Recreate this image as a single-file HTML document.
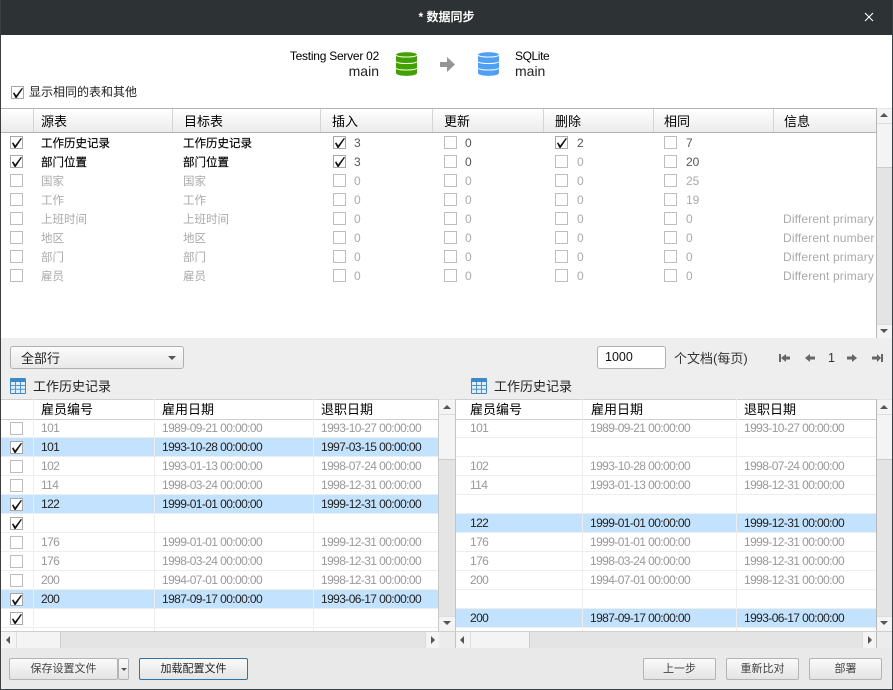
<!DOCTYPE html>
<html lang="zh"><head><meta charset="utf-8"><title>数据同步</title>
<style>
html,body{margin:0;padding:0;width:893px;height:690px;overflow:hidden;background:#eee}
body{position:relative;font:12px/19px "Liberation Sans","Noto Sans CJK SC",sans-serif;color:#000}
div,span{position:absolute;box-sizing:border-box;white-space:nowrap}
svg{position:absolute;display:block}
.c{width:13px;height:13px;border:1px solid #bdbdbd;background:#fff}
.k{border-color:#a8a8a8}
.k::after{content:"";position:absolute;left:1px;top:1px;width:10px;height:10px;background:#111;clip-path:polygon(0 52%,12% 44%,32% 74%,88% 0,100% 5%,36% 100%,25% 100%)}
.r{left:0;height:19px;width:100%}
.q span:not(.c){top:1px}
.q span.nm{font-size:11.5px;top:2px}
.bd{-webkit-text-stroke:.15px #000}
.di{letter-spacing:.15px}
.g{color:#aaa}.d{color:#555}
.v{top:0;bottom:0;width:1px;background:#d4d4d4}
.hd span{top:0;font-size:13px;line-height:23px}
.hd1 span{top:1px}
.t{overflow:hidden;background:#fff}
.t .r{border-bottom:1px solid #eee}
.t .b{background:#c3e2fd;border-bottom:1px solid #eee}
.t .r span{top:0;line-height:19px;color:#999;letter-spacing:-.6px}
.t .r span.c{top:3px}
.t .b span{color:#222}
.l{width:1px;top:0;bottom:0;background:#eee}
.sb{background:#e4e4e4;border-left:1px solid #c8c8c8}
.btn{background:linear-gradient(#fafafa,#e4e4e4);border:1px solid #b4b4b4;border-radius:2px;text-align:center;height:22px;line-height:20px;color:#444;font-size:11px}
.tu{width:0;height:0;border:4px solid transparent;border-top:0;border-bottom:4px solid #555}
.td{width:0;height:0;border:4px solid transparent;border-bottom:0;border-top:4px solid #555}
.tl{width:0;height:0;border:4px solid transparent;border-left:0;border-right:4px solid #555}
.tr{width:0;height:0;border:4px solid transparent;border-right:0;border-left:4px solid #555}
.bt{background:#f4f4f4}
.wb{background:#f4f4f4}
</style></head><body>

<!-- title bar -->
<div style="left:0;top:0;width:893px;height:35px;background:#2d3235"></div>
<div style="left:0;top:0;width:893px;height:35px;text-align:center;line-height:34px;color:#fff;font-weight:bold;font-size:12px">* 数据同步</div>
<svg style="left:864px;top:12px" width="10" height="10" viewBox="0 0 10 10"><path d="M1 1L9 9M9 1L1 9" stroke="#fff" stroke-width="1.1" fill="none"/></svg>

<!-- top white -->
<div style="left:1px;top:35px;width:891px;height:303px;background:#fff"></div>
<div style="left:220px;top:47px;width:159px;text-align:right;line-height:18px;letter-spacing:-.25px">Testing Server 02</div>
<div style="left:220px;top:62px;width:159px;text-align:right;line-height:18px;font-size:14px;color:#222">main</div>
<div style="left:515px;top:47px;line-height:18px;letter-spacing:-.4px">SQLite</div>
<div style="left:515px;top:62px;line-height:18px;font-size:14px;color:#222">main</div>

<svg style="left:395px;top:51px" width="23" height="26" viewBox="0 0 23 26">
<path d="M1 4C1 .4 22 .4 22 4V22C22 25.8 1 25.8 1 22Z" fill="#42a000"/>
<path d="M1 4.3C4 6.6 19 6.6 22 4.3M1 10.8C4 13.1 19 13.1 22 10.8M1 17.3C4 19.6 19 19.6 22 17.3" stroke="#fff" stroke-width="1" fill="none" opacity=".95"/>
</svg>
<svg style="left:477px;top:51px" width="23" height="26" viewBox="0 0 23 26">
<path d="M1 4C1 .4 22 .4 22 4V22C22 25.8 1 25.8 1 22Z" fill="#4f9ff5"/>
<path d="M1 4.3C4 6.6 19 6.6 22 4.3M1 10.8C4 13.1 19 13.1 22 10.8M1 17.3C4 19.6 19 19.6 22 17.3" stroke="#fff" stroke-width="1" fill="none" opacity=".95"/>
</svg>
<svg style="left:440px;top:57px" width="16" height="16" viewBox="0 0 16 16"><path d="M0 5H7V0L15 7.5L7 15V10H0Z" fill="#959595"/></svg>

<span class="c k" style="left:11px;top:86px"></span>
<div style="left:29px;top:83px;color:#222">显示相同的表和其他</div>

<!-- top table -->
<div class="hd hd1" style="left:1px;top:108px;width:875px;height:25px;border-top:1px solid #b2b2b2;border-bottom:1px solid #b2b2b2;background:linear-gradient(#fff,#ebebeb)">
<span style="left:40px">源表</span><span style="left:183px">目标表</span><span style="left:331px">插入</span><span style="left:443px">更新</span><span style="left:554px">删除</span><span style="left:663px">相同</span><span style="left:783px">信息</span>
<div class="v" style="left:32px"></div><div class="v" style="left:171px"></div><div class="v" style="left:319px"></div><div class="v" style="left:431px"></div><div class="v" style="left:542px"></div><div class="v" style="left:652px"></div><div class="v" style="left:772px"></div>
</div>

<div style="left:1px;top:133px;width:875px;height:205px;overflow:hidden">
<div class="r q" style="top:0"><span class="c k" style="left:9px;top:3px"></span><span class="nm bd" style="left:40px">工作历史记录</span><span class="nm bd" style="left:182px">工作历史记录</span><span class="c k" style="left:332px;top:3px"></span><span class="d" style="left:353px">3</span><span class="c" style="left:443px;top:3px"></span><span class="d" style="left:464px">0</span><span class="c k" style="left:554px;top:3px"></span><span class="d" style="left:576px">2</span><span class="c" style="left:663px;top:3px"></span><span class="d" style="left:685px">7</span></div>
<div class="r q" style="top:19px"><span class="c k" style="left:9px;top:3px"></span><span class="nm bd" style="left:40px">部门位置</span><span class="nm bd" style="left:182px">部门位置</span><span class="c k" style="left:332px;top:3px"></span><span class="d" style="left:353px">3</span><span class="c" style="left:443px;top:3px"></span><span class="d" style="left:464px">0</span><span class="c" style="left:554px;top:3px"></span><span class="g" style="left:576px">0</span><span class="c" style="left:663px;top:3px"></span><span class="d" style="left:685px">20</span></div>
<div class="r q g" style="top:38px"><span class="c" style="left:9px;top:3px"></span><span class="nm" style="left:40px">国家</span><span class="nm" style="left:182px">国家</span><span class="c" style="left:332px;top:3px"></span><span style="left:353px">0</span><span class="c" style="left:443px;top:3px"></span><span style="left:464px">0</span><span class="c" style="left:554px;top:3px"></span><span style="left:576px">0</span><span class="c" style="left:663px;top:3px"></span><span style="left:685px">25</span></div>
<div class="r q g" style="top:57px"><span class="c" style="left:9px;top:3px"></span><span class="nm" style="left:40px">工作</span><span class="nm" style="left:182px">工作</span><span class="c" style="left:332px;top:3px"></span><span style="left:353px">0</span><span class="c" style="left:443px;top:3px"></span><span style="left:464px">0</span><span class="c" style="left:554px;top:3px"></span><span style="left:576px">0</span><span class="c" style="left:663px;top:3px"></span><span style="left:685px">19</span></div>
<div class="r q g" style="top:76px"><span class="c" style="left:9px;top:3px"></span><span class="nm" style="left:40px">上班时间</span><span class="nm" style="left:182px">上班时间</span><span class="c" style="left:332px;top:3px"></span><span style="left:353px">0</span><span class="c" style="left:443px;top:3px"></span><span style="left:464px">0</span><span class="c" style="left:554px;top:3px"></span><span style="left:576px">0</span><span class="c" style="left:663px;top:3px"></span><span style="left:685px">0</span><span class="di" style="left:782px">Different primary</span></div>
<div class="r q g" style="top:95px"><span class="c" style="left:9px;top:3px"></span><span class="nm" style="left:40px">地区</span><span class="nm" style="left:182px">地区</span><span class="c" style="left:332px;top:3px"></span><span style="left:353px">0</span><span class="c" style="left:443px;top:3px"></span><span style="left:464px">0</span><span class="c" style="left:554px;top:3px"></span><span style="left:576px">0</span><span class="c" style="left:663px;top:3px"></span><span style="left:685px">0</span><span class="di" style="left:782px">Different number</span></div>
<div class="r q g" style="top:114px"><span class="c" style="left:9px;top:3px"></span><span class="nm" style="left:40px">部门</span><span class="nm" style="left:182px">部门</span><span class="c" style="left:332px;top:3px"></span><span style="left:353px">0</span><span class="c" style="left:443px;top:3px"></span><span style="left:464px">0</span><span class="c" style="left:554px;top:3px"></span><span style="left:576px">0</span><span class="c" style="left:663px;top:3px"></span><span style="left:685px">0</span><span class="di" style="left:782px">Different primary</span></div>
<div class="r q g" style="top:133px"><span class="c" style="left:9px;top:3px"></span><span class="nm" style="left:40px">雇员</span><span class="nm" style="left:182px">雇员</span><span class="c" style="left:332px;top:3px"></span><span style="left:353px">0</span><span class="c" style="left:443px;top:3px"></span><span style="left:464px">0</span><span class="c" style="left:554px;top:3px"></span><span style="left:576px">0</span><span class="c" style="left:663px;top:3px"></span><span style="left:685px">0</span><span class="di" style="left:782px">Different primary</span></div>
</div>

<!-- top scrollbar -->
<div class="sb" style="left:876px;top:108px;width:16px;height:230px;border-left:1px solid #b8b8b8"></div>
<div class="bt" style="left:877px;top:109px;width:15px;height:15px;border-bottom:1px solid #ddd"></div>
<div class="tu" style="left:880px;top:113px"></div>
<div class="wb" style="left:877px;top:124px;width:15px;height:44px;border-bottom:1px solid #ccc"></div>
<div class="bt" style="left:877px;top:324px;width:15px;height:14px;border-top:1px solid #ddd"></div>
<div class="td" style="left:880px;top:329px"></div>

<!-- toolbar -->
<div style="left:10px;top:346px;width:174px;height:23px;border:1px solid #b0b0b0;border-radius:3px;background:linear-gradient(#fbfbfb,#e9e9e9);line-height:23px;padding-left:10px;font-size:13px;color:#222">全部行</div>
<div class="td" style="left:168px;top:356px;border-width:4px 4px 0;border-top-color:#555"></div>
<div style="left:597px;top:346px;width:69px;height:23px;border:1px solid #b0b0b0;border-radius:3px;background:#fff;line-height:21px;padding-left:7px;font-size:12.5px;color:#111">1000</div>
<div style="left:674px;top:349px;font-size:13px;color:#333">个文档(每页)</div>
<svg style="left:778px;top:351px" width="106" height="14" viewBox="0 0 106 14" fill="#666">
<path d="M1 3H3V11H1ZM3 7L8 3V5.5H12V8.5H8V11Z"/>
<path d="M27 7L32 3V5.5H37V8.5H32V11Z"/>
<path d="M69 5.5H74V3L79 7L74 11V8.5H69Z"/>
<path d="M94 5.5H99V3L103 7L99 11V8.5H94ZM103 3H105V11H103Z"/>
</svg>
<div style="left:828px;top:349px;color:#333;font-size:12.5px">1</div>

<!-- section titles -->
<svg style="left:10px;top:378px" width="16" height="16" viewBox="0 0 16 16"><rect width="16" height="16" rx="1" fill="#3f88c5"/><path d="M1 4H15V15H1Z" fill="#e2eefa"/><path d="M5.5 4V15M10.5 4V15M1 7.5H15M1 11.3H15" stroke="#4f94cf" stroke-width="1"/></svg>
<div style="left:33px;top:377px;font-size:13px;color:#222">工作历史记录</div>
<svg style="left:471px;top:378px" width="16" height="16" viewBox="0 0 16 16"><rect width="16" height="16" rx="1" fill="#3f88c5"/><path d="M1 4H15V15H1Z" fill="#e2eefa"/><path d="M5.5 4V15M10.5 4V15M1 7.5H15M1 11.3H15" stroke="#4f94cf" stroke-width="1"/></svg>
<div style="left:494px;top:377px;font-size:13px;color:#222">工作历史记录</div>

<!-- left table -->
<div class="t" style="left:1px;top:399px;width:437px;height:232px">
<div style="left:0;top:0;width:437px;height:21px;border-top:1px solid #cfcfcf;border-bottom:1px solid #cfcfcf;background:#fff"></div>
<div class="hd"><span style="left:40px;top:-1px;font-size:13px;line-height:23px">雇员编号</span><span style="left:161px;top:-1px;font-size:13px;line-height:23px">雇用日期</span><span style="left:320px;top:-1px;font-size:13px;line-height:23px">退职日期</span></div>
<div class="r" style="top:20px"><span class="c" style="left:9px"></span><span style="left:40px">101</span><span style="left:161px">1989-09-21 00:00:00</span><span style="left:320px">1993-10-27 00:00:00</span></div>
<div class="r b" style="top:39px"><span class="c k" style="left:9px"></span><span style="left:40px">101</span><span style="left:161px">1993-10-28 00:00:00</span><span style="left:320px">1997-03-15 00:00:00</span></div>
<div class="r" style="top:58px"><span class="c" style="left:9px"></span><span style="left:40px">102</span><span style="left:161px">1993-01-13 00:00:00</span><span style="left:320px">1998-07-24 00:00:00</span></div>
<div class="r" style="top:77px"><span class="c" style="left:9px"></span><span style="left:40px">114</span><span style="left:161px">1998-03-24 00:00:00</span><span style="left:320px">1998-12-31 00:00:00</span></div>
<div class="r b" style="top:96px"><span class="c k" style="left:9px"></span><span style="left:40px">122</span><span style="left:161px">1999-01-01 00:00:00</span><span style="left:320px">1999-12-31 00:00:00</span></div>
<div class="r" style="top:115px"><span class="c k" style="left:9px"></span></div>
<div class="r" style="top:134px"><span class="c" style="left:9px"></span><span style="left:40px">176</span><span style="left:161px">1999-01-01 00:00:00</span><span style="left:320px">1999-12-31 00:00:00</span></div>
<div class="r" style="top:153px"><span class="c" style="left:9px"></span><span style="left:40px">176</span><span style="left:161px">1998-03-24 00:00:00</span><span style="left:320px">1998-12-31 00:00:00</span></div>
<div class="r" style="top:172px"><span class="c" style="left:9px"></span><span style="left:40px">200</span><span style="left:161px">1994-07-01 00:00:00</span><span style="left:320px">1998-12-31 00:00:00</span></div>
<div class="r b" style="top:191px"><span class="c k" style="left:9px"></span><span style="left:40px">200</span><span style="left:161px">1987-09-17 00:00:00</span><span style="left:320px">1993-06-17 00:00:00</span></div>
<div class="r" style="top:210px"><span class="c k" style="left:9px"></span></div>
<div class="l" style="left:32px"></div><div class="l" style="left:153px"></div><div class="l" style="left:312px"></div>
</div>

<!-- right table -->
<div class="t" style="left:456px;top:399px;width:420px;height:232px">
<div style="left:0;top:0;width:420px;height:21px;border-top:1px solid #cfcfcf;border-bottom:1px solid #cfcfcf;background:#fff"></div>
<div class="hd"><span style="left:14px;top:-1px;font-size:13px;line-height:23px">雇员编号</span><span style="left:135px;top:-1px;font-size:13px;line-height:23px">雇用日期</span><span style="left:288px;top:-1px;font-size:13px;line-height:23px">退职日期</span></div>
<div class="r" style="top:20px"><span style="left:14px">101</span><span style="left:134px">1989-09-21 00:00:00</span><span style="left:288px">1993-10-27 00:00:00</span></div>
<div class="r" style="top:39px"></div>
<div class="r" style="top:58px"><span style="left:14px">102</span><span style="left:134px">1993-10-28 00:00:00</span><span style="left:288px">1998-07-24 00:00:00</span></div>
<div class="r" style="top:77px"><span style="left:14px">114</span><span style="left:134px">1993-01-13 00:00:00</span><span style="left:288px">1998-12-31 00:00:00</span></div>
<div class="r" style="top:96px"></div>
<div class="r b" style="top:115px"><span style="left:14px">122</span><span style="left:134px">1999-01-01 00:00:00</span><span style="left:288px">1999-12-31 00:00:00</span></div>
<div class="r" style="top:134px"><span style="left:14px">176</span><span style="left:134px">1999-01-01 00:00:00</span><span style="left:288px">1999-12-31 00:00:00</span></div>
<div class="r" style="top:153px"><span style="left:14px">176</span><span style="left:134px">1998-03-24 00:00:00</span><span style="left:288px">1998-12-31 00:00:00</span></div>
<div class="r" style="top:172px"><span style="left:14px">200</span><span style="left:134px">1994-07-01 00:00:00</span><span style="left:288px">1998-12-31 00:00:00</span></div>
<div class="r" style="top:191px"></div>
<div class="r b" style="top:210px"><span style="left:14px">200</span><span style="left:134px">1987-09-17 00:00:00</span><span style="left:288px">1993-06-17 00:00:00</span></div>
<div class="l" style="left:126px"></div><div class="l" style="left:280px"></div>
</div>

<!-- left v scrollbar -->
<div class="sb" style="left:438px;top:399px;width:18px;height:232px;border-right:1px solid #c4c4c4"></div>
<div class="bt" style="left:439px;top:400px;width:16px;height:15px;border-bottom:1px solid #ddd"></div>
<div class="tu" style="left:443px;top:405px"></div>
<div class="wb" style="left:439px;top:415px;width:16px;height:45px;border-bottom:1px solid #ccc"></div>
<div class="bt" style="left:439px;top:616px;width:16px;height:15px;border-top:1px solid #ddd"></div>
<div class="td" style="left:443px;top:621px"></div>

<!-- right v scrollbar -->
<div class="sb" style="left:876px;top:399px;width:16px;height:232px;border-left:1px solid #b8b8b8"></div>
<div class="bt" style="left:877px;top:400px;width:15px;height:15px;border-bottom:1px solid #ddd"></div>
<div class="tu" style="left:880px;top:405px"></div>
<div class="wb" style="left:877px;top:415px;width:15px;height:45px;border-bottom:1px solid #ccc"></div>
<div class="bt" style="left:877px;top:616px;width:15px;height:15px;border-top:1px solid #ddd"></div>
<div class="td" style="left:880px;top:621px"></div>

<!-- h scrollbars -->
<div style="left:1px;top:631px;width:891px;height:17px;background:#e4e4e4;border-top:1px solid #cfcfcf"></div>
<div class="bt" style="left:1px;top:632px;width:15px;height:16px"></div>
<div class="tl" style="left:6px;top:636px"></div>
<div class="wb" style="left:16px;top:632px;width:45px;height:16px;border-left:1px solid #ddd;border-right:1px solid #ccc"></div>
<div class="bt" style="left:425px;top:632px;width:14px;height:16px;border-left:1px solid #ddd"></div>
<div class="tr" style="left:431px;top:636px"></div>
<div style="left:439px;top:632px;width:17px;height:16px;background:#ececec;border-right:1px solid #c4c4c4"></div>
<div class="bt" style="left:456px;top:632px;width:14px;height:16px"></div>
<div class="tl" style="left:460px;top:636px"></div>
<div class="wb" style="left:470px;top:632px;width:60px;height:16px;border-left:1px solid #ddd;border-right:1px solid #ccc"></div>
<div class="bt" style="left:862px;top:632px;width:14px;height:16px;border-left:1px solid #ddd"></div>
<div class="tr" style="left:868px;top:636px"></div>
<div style="left:876px;top:632px;width:16px;height:16px;background:#ececec;border-left:1px solid #b8b8b8"></div>

<!-- bottom bar -->
<div style="left:1px;top:648px;width:891px;height:41px;background:#e9e9e9"></div>
<div class="btn" style="left:9px;top:658px;width:109px">保存设置文件</div>
<div class="btn" style="left:118px;top:658px;width:11px"></div>
<div style="left:121px;top:668px;width:0;height:0;border:3px solid transparent;border-bottom:0;border-top:3px solid #555"></div>
<div class="btn" style="left:139px;top:658px;width:109px;border-color:#2f76a8;color:#222">加载配置文件</div>
<div class="btn" style="left:643px;top:658px;width:73px">上一步</div>
<div class="btn" style="left:726px;top:658px;width:73px">重新比对</div>
<div class="btn" style="left:809px;top:658px;width:73px">部署</div>

<!-- window border -->
<div style="left:0;top:0;width:893px;height:690px;border:1px solid #3a3f42;border-top:0;pointer-events:none"></div>
</body></html>
